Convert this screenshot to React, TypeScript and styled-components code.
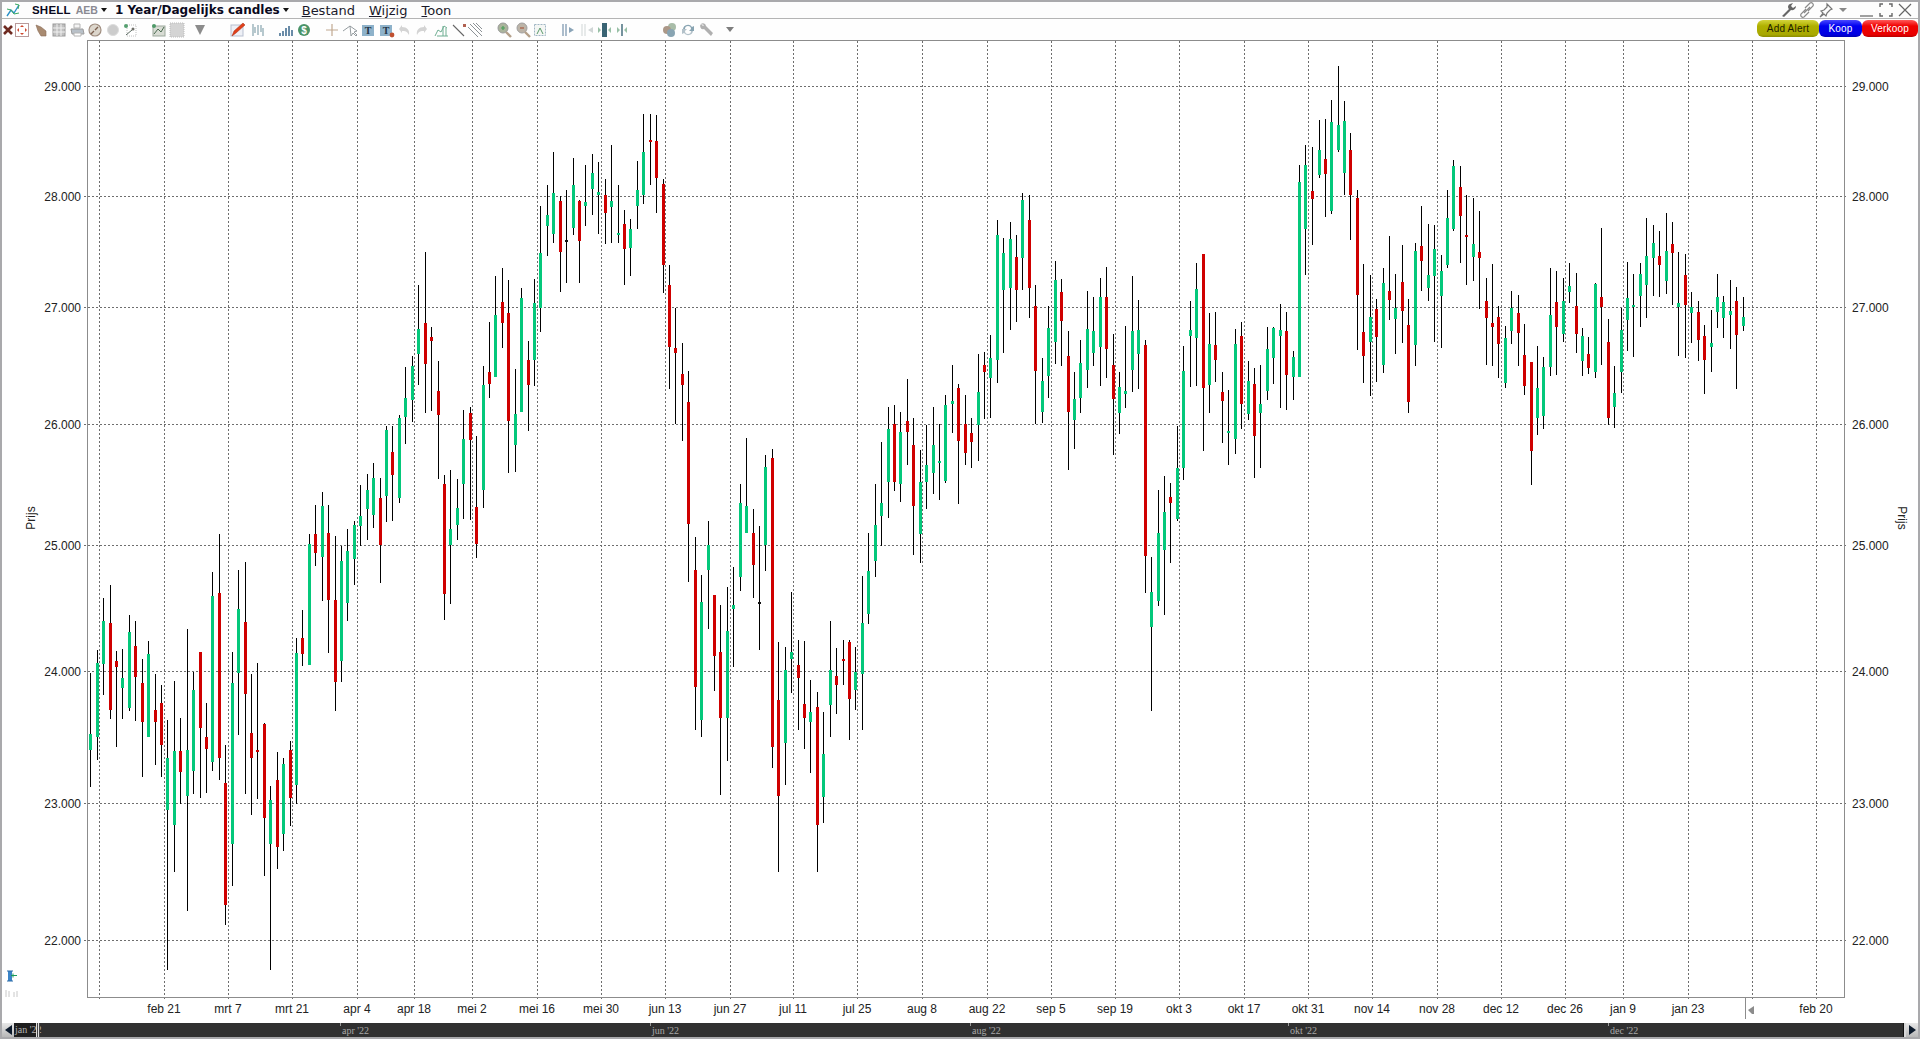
import React from 'react';
import styled, { createGlobalStyle } from 'styled-components';

type Row = [number, number, number, number, number, string];
type Candle = { x: number; hi: number; top: number; bot: number; lo: number; c: string };

const seg = (ox: number, oy: number, kx: number, ky: number, rows: Row[]): Candle[] =>
  rows.map(([x, h, t, b, l, c]) => ({
    x: Math.floor(ox + x * kx),
    hi: Math.round(oy + h * ky),
    top: Math.round(oy + t * ky),
    bot: Math.round(oy + b * ky),
    lo: Math.round(oy + l * ky),
    c,
  }));

const third = 1 / 3;

const candles: Candle[] = [
  ...seg(80, 500, third, third, [
    [31, 518, 702, 750, 860, 'g'], [52, 450, 489, 711, 780, 'g'], [70, 294, 363, 492, 585, 'g'],
    [91, 255, 369, 630, 657, 'r'], [109, 453, 483, 501, 741, 'r'], [127, 447, 534, 564, 657, 'g'],
    [148, 345, 396, 624, 633, 'g'], [166, 363, 438, 531, 663, 'r'], [187, 477, 549, 666, 831, 'r'],
    [205, 423, 462, 711, 711, 'g'], [226, 522, 630, 666, 795, 'r'], [244, 555, 609, 735, 831, 'r'],
    [262, 660, 774, 930, 1410, 'g'], [283, 543, 753, 975, 1116, 'g'], [301, 654, 753, 816, 912, 'r'],
    [322, 387, 750, 888, 1233, 'g'], [340, 516, 570, 813, 882, 'g'], [361, 456, 456, 684, 894, 'r'],
    [379, 609, 711, 747, 879, 'r'], [397, 216, 288, 786, 813, 'g'], [418, 102, 279, 774, 840, 'r'],
    [436, 735, 849, 1215, 1275, 'r'], [457, 456, 549, 1032, 1158, 'g'], [475, 210, 327, 519, 705, 'g'],
    [496, 186, 366, 582, 882, 'r'], [514, 522, 699, 774, 945, 'r'], [532, 489, 750, 756, 897, 'r'],
    [553, 669, 672, 954, 1128, 'r'], [571, 858, 900, 1032, 1410, 'g'], [592, 756, 840, 1041, 1107, 'r'],
    [610, 774, 792, 1002, 1053, 'g'], [631, 723, 750, 894, 978, 'r'], [649, 414, 459, 855, 912, 'g'],
    [667, 330, 414, 462, 498, 'r'], [688, 102, 132, 495, 495, 'g'], [706, 15, 102, 159, 198, 'r'],
    [727, -24, 18, 171, 303, 'g'], [745, 15, 99, 300, 459, 'r'], [766, 108, 300, 546, 633, 'r'],
    [784, 138, 183, 483, 546, 'g'], [802, 87, 153, 309, 363, 'g'], [823, 63, 75, 177, 255, 'g'],
  ]),
  ...seg(300, 240, third, third, [
    [181, 735, 828, 858, 918, 'g'], [202, 702, 750, 807, 900, 'g'], [220, 669, 714, 825, 864, 'g'],
    [241, 714, 774, 915, 1029, 'r'], [259, 558, 570, 768, 846, 'g'], [277, 558, 636, 705, 843, 'r'],
    [298, 525, 534, 774, 789, 'g'], [316, 381, 474, 531, 612, 'g'], [337, 348, 378, 480, 546, 'g'],
    [355, 135, 267, 342, 435, 'g'], [376, 36, 249, 372, 519, 'r'], [394, 261, 291, 303, 513, 'r'],
    [415, 363, 453, 525, 717, 'r'], [433, 705, 732, 1062, 1140, 'r'], [451, 690, 867, 915, 1092, 'g'],
    [472, 717, 804, 855, 900, 'g'], [490, 510, 597, 732, 837, 'g'], [511, 501, 519, 600, 840, 'r'],
    [529, 588, 801, 912, 954, 'r'], [550, 378, 435, 750, 804, 'g'], [568, 246, 396, 432, 474, 'r'],
    [586, 108, 225, 411, 411, 'g'], [607, 84, 186, 249, 324, 'r'], [625, 120, 219, 543, 699, 'r'],
    [646, 387, 522, 615, 696, 'g'], [664, 144, 174, 516, 516, 'g'], [685, 303, 360, 435, 573, 'r'],
    [703, 117, 189, 360, 438, 'g'], [721, -102, 39, 204, 276, 'g'],
  ]),
  ...seg(500, 100, third, third, [
    [142, 255, 345, 378, 468, 'g'], [160, 156, 279, 402, 429, 'g'], [181, 288, 303, 456, 576, 'r'],
    [199, 270, 420, 426, 549, 'k'], [220, 174, 255, 384, 405, 'g'], [238, 300, 303, 423, 549, 'r'],
    [256, 195, 306, 318, 378, 'g'], [277, 162, 219, 267, 345, 'g'], [295, 186, 276, 285, 402, 'g'],
    [316, 237, 285, 339, 432, 'r'], [334, 135, 303, 321, 429, 'g'], [355, 255, 399, 405, 429, 'g'],
    [373, 330, 372, 447, 555, 'r'], [391, 357, 387, 444, 528, 'g'], [412, 183, 270, 318, 387, 'g'],
    [430, 42, 156, 285, 312, 'g'], [451, 42, 120, 126, 255, 'r'], [469, 45, 123, 234, 339, 'r'],
    [490, 237, 252, 495, 579, 'r'], [508, 495, 555, 741, 866, 'r'], [526, 624, 744, 759, 971, 'r'],
  ]),
  ...seg(660, 340, third, 0.3444, [
    [67, 9, 99, 130, 292, 'r'], [85, 90, 180, 534, 702, 'r'], [106, 573, 669, 1009, 1131, 'r'],
    [124, 682, 762, 1102, 1152, 'g'], [145, 526, 595, 667, 838, 'g'], [163, 740, 740, 917, 1018, 'r'],
    [181, 769, 906, 1098, 1320, 'r'], [202, 717, 846, 1098, 1221, 'g'], [220, 660, 769, 781, 949, 'g'],
    [241, 418, 474, 687, 729, 'g'], [259, 285, 483, 559, 559, 'g'], [280, 490, 560, 652, 748, 'r'],
    [298, 540, 761, 766, 900, 'k'], [316, 334, 369, 595, 670, 'g'], [337, 316, 343, 1182, 1242, 'r'],
    [355, 877, 1045, 1323, 1545, 'r'], [376, 891, 958, 1170, 1291, 'g'], [394, 732, 906, 925, 1024, 'g'],
    [415, 870, 944, 980, 1131, 'r'], [433, 873, 1057, 1098, 1188, 'r'], [451, 987, 1080, 1109, 1257, 'g'],
    [472, 1021, 1066, 1407, 1545, 'r'], [490, 1080, 1202, 1326, 1401, 'g'], [511, 816, 958, 1059, 1152, 'g'],
    [529, 894, 976, 1002, 1086, 'r'], [550, 870, 926, 932, 1002, 'r'], [568, 870, 877, 1041, 1161, 'r'],
    [586, 891, 964, 1016, 1074, 'g'], [607, 685, 822, 969, 1131, 'g'], [625, 559, 671, 795, 825, 'g'],
    [646, 418, 537, 642, 687, 'g'], [664, 296, 474, 510, 597, 'g'], [685, 195, 258, 411, 516, 'g'],
    [703, 189, 244, 411, 438, 'r'], [721, 209, 267, 417, 469, 'g'], [742, 113, 235, 267, 363, 'r'],
    [760, 226, 305, 481, 624, 'r'], [781, 319, 412, 562, 648, 'g'], [799, 247, 363, 411, 490, 'g'],
    [820, 195, 305, 385, 447, 'g'], [838, 244, 351, 357, 465, 'g'], [856, 160, 189, 408, 414, 'g'],
    [877, 73, 177, 186, 270, 'g'], [895, 128, 139, 292, 475, 'r'], [916, 160, 244, 328, 363, 'r'],
    [934, 226, 270, 296, 372, 'r'], [955, 41, 151, 246, 351, 'g'], [973, 35, 73, 93, 229, 'r'],
  ]),
  ...seg(0, 0, 1, 1, [
    [990, 335, 358, 378, 418, 'g'], [997, 220, 235, 360, 383, 'g'], [1003, 238, 253, 290, 353, 'g'],
    [1010, 222, 239, 288, 330, 'g'], [1016, 235, 257, 290, 322, 'r'], [1022, 193, 200, 258, 290, 'g'],
    [1029, 195, 220, 288, 318, 'r'], [1035, 285, 306, 371, 424, 'r'],
  ]),
  ...seg(1040, 180, third, 0.3444, [
    [7, 517, 584, 673, 705, 'g'], [25, 366, 430, 569, 633, 'g'], [46, 235, 290, 470, 534, 'g'],
    [64, 287, 325, 409, 540, 'r'], [85, 438, 511, 674, 842, 'r'], [103, 558, 636, 697, 781, 'g'],
    [121, 465, 531, 633, 677, 'g'], [142, 322, 433, 552, 604, 'g'], [160, 340, 438, 502, 540, 'g'],
    [181, 285, 340, 485, 598, 'g'], [199, 253, 340, 491, 575, 'r'], [220, 447, 537, 636, 799, 'r'],
    [238, 558, 601, 677, 738, 'g'], [256, 424, 613, 621, 662, 'g'], [277, 279, 438, 552, 616, 'g'],
    [295, 348, 436, 505, 607, 'g'], [316, 465, 479, 1092, 1199, 'r'], [334, 1095, 1196, 1298, 1542, 'g'],
    [355, 900, 1025, 1222, 1237, 'g'], [373, 859, 964, 1074, 1263, 'g'], [391, 880, 920, 938, 1112, 'r'],
    [412, 714, 836, 984, 990, 'g'], [430, 483, 555, 836, 871, 'g'], [451, 351, 436, 453, 601, 'g'],
    [469, 241, 317, 459, 598, 'g'], [490, 215, 215, 604, 787, 'r'], [508, 386, 476, 595, 677, 'g'],
    [526, 383, 479, 523, 587, 'r'], [547, 558, 616, 642, 764, 'r'], [565, 610, 729, 735, 828, 'g'],
    [586, 433, 476, 752, 796, 'g'], [604, 412, 453, 650, 723, 'r'], [625, 526, 584, 679, 697, 'g'],
    [643, 546, 592, 743, 865, 'r'], [661, 537, 650, 677, 836, 'g'], [682, 427, 491, 613, 639, 'g'],
    [700, 427, 430, 517, 592, 'g'], [721, 360, 436, 453, 662, 'g'], [739, 383, 438, 566, 668, 'r'],
    [760, 497, 514, 572, 639, 'g'],
  ]),
  ...seg(0, 0, 1, 1, [
    [1299, 165, 182, 377, 377, 'g'], [1305, 145, 165, 229, 275, 'g'], [1312, 147, 191, 199, 245, 'r'],
    [1319, 120, 150, 175, 178, 'g'], [1325, 119, 159, 174, 217, 'r'], [1331, 100, 122, 211, 214, 'g'],
    [1338, 66, 125, 150, 152, 'g'],
  ]),
  ...seg(1340, 60, third, third, [
    [13, 123, 183, 339, 406, 'g'], [31, 219, 270, 405, 540, 'r'], [52, 390, 414, 705, 870, 'r'],
    [70, 612, 816, 888, 969, 'r'], [91, 645, 771, 846, 1008, 'g'], [109, 717, 747, 831, 966, 'r'],
    [130, 624, 669, 915, 939, 'g'], [148, 528, 693, 720, 780, 'r'], [166, 642, 744, 777, 882, 'g'],
    [187, 555, 666, 753, 849, 'r'], [205, 717, 795, 1026, 1059, 'r'], [226, 549, 573, 855, 918, 'g'],
    [244, 438, 558, 603, 693, 'r'], [265, 492, 645, 684, 723, 'g'], [283, 495, 567, 648, 846, 'g'],
    [304, 585, 633, 708, 864, 'g'], [322, 390, 474, 615, 624, 'g'], [340, 300, 318, 507, 513, 'g'],
    [361, 318, 381, 468, 609, 'r'], [379, 405, 525, 531, 675, 'r'], [400, 414, 552, 591, 663, 'g'],
    [418, 453, 576, 594, 747, 'r'], [439, 654, 723, 774, 915, 'r'], [457, 612, 789, 801, 918, 'r'],
    [475, 738, 771, 852, 954, 'r'], [496, 798, 834, 969, 984, 'g'], [514, 693, 744, 813, 852, 'g'],
    [535, 705, 759, 819, 918, 'r'], [553, 792, 885, 978, 1005, 'r'], [574, 906, 906, 1173, 1275, 'r'],
    [592, 858, 984, 1074, 1125, 'g'], [610, 891, 921, 1068, 1107, 'g'], [631, 624, 765, 921, 948, 'g'],
    [649, 633, 726, 801, 945, 'r'], [670, 654, 723, 822, 846, 'g'], [688, 609, 678, 696, 729, 'g'],
    [709, 639, 738, 822, 879, 'r'], [727, 804, 828, 903, 948, 'g'], [745, 831, 882, 924, 942, 'r'],
    [766, 669, 672, 936, 954, 'g'], [784, 504, 711, 741, 915, 'r'], [805, 777, 846, 1074, 1095, 'r'],
    [823, 918, 999, 1041, 1104, 'g'], [844, 744, 810, 936, 999, 'g'], [862, 606, 714, 780, 873, 'g'],
    [880, 642, 735, 741, 891, 'g'], [901, 609, 642, 708, 801, 'g'], [919, 474, 588, 675, 774, 'g'],
    [940, 495, 549, 594, 708, 'g'], [958, 513, 588, 615, 711, 'r'], [979, 459, 573, 663, 702, 'g'],
    [997, 486, 552, 579, 735, 'r'], [1015, 576, 729, 741, 888, 'g'], [1036, 582, 645, 735, 894, 'r'],
    [1054, 696, 741, 759, 849, 'g'], [1075, 723, 756, 840, 903, 'r'], [1093, 795, 828, 900, 1002, 'r'],
    [1114, 750, 849, 861, 936, 'g'], [1132, 642, 711, 756, 804, 'g'], [1150, 708, 726, 774, 834, 'g'],
    [1171, 660, 753, 765, 867, 'g'], [1189, 681, 723, 825, 987, 'r'], [1210, 711, 771, 798, 813, 'g'],
  ]),
];

const bodyColor: Record<string, string> = { g: '#04c87b', r: '#cf0000', k: '#111111' };

const priceLines: [number, string][] = [
  [86, '29.000'], [196, '28.000'], [307, '27.000'], [424, '26.000'],
  [545, '25.000'], [671, '24.000'], [803, '23.000'], [940, '22.000'],
];

const timeLines: [number, string][] = [
  [99, ''], [164, 'feb 21'], [228, 'mrt 7'], [292, 'mrt 21'], [357, 'apr 4'], [414, 'apr 18'],
  [472, 'mei 2'], [537, 'mei 16'], [601, 'mei 30'], [665, 'jun 13'], [730, 'jun 27'], [793, 'jul 11'],
  [857, 'jul 25'], [922, 'aug 8'], [987, 'aug 22'], [1051, 'sep 5'], [1115, 'sep 19'], [1179, 'okt 3'],
  [1244, 'okt 17'], [1308, 'okt 31'], [1372, 'nov 14'], [1437, 'nov 28'], [1501, 'dec 12'],
  [1565, 'dec 26'], [1623, 'jan 9'], [1688, 'jan 23'], [1752, ''], [1816, 'feb 20'],
];

const months: [number, string][] = [
  [342, "apr '22"], [652, "jun '22"], [972, "aug '22"], [1290, "okt '22"], [1610, "dec '22"],
];

const tools: { x: number; icon: React.ReactNode }[] = [
  { x: 8, icon: <path d="M4 4l8 8M12 4l-8 8" stroke="#6e2a20" strokeWidth="2.6" /> },
  { x: 22, icon: (<>
    <rect x="1.5" y="1.5" width="13" height="13" fill="#fff" stroke="#b89a9a" />
    <path d="M8 3l2 2H6zM8 13l-2-2h4zM3 8l2-2v4zM13 8l-2 2V6z" fill="#cf4a30" />
  </>) },
  { x: 41, icon: <path d="M3 3l5 2 5 4v5H8L5 9z" fill="#a88a70" stroke="#8a6c58" strokeWidth=".6" /> },
  { x: 59, icon: (<>
    <rect x="2" y="2" width="12" height="12" fill="#c0c0c0" stroke="#9a9a9a" />
    <path d="M6 2v12M10 2v12M2 6h12M2 10h12" stroke="#f0f0f0" />
  </>) },
  { x: 77, icon: (<>
    <path d="M5 2h6v4H5z" fill="#f4f4f4" stroke="#b4b4b4" />
    <path d="M2 7h12l1 5H3z" fill="#b8c0c8" stroke="#9c9c9c" />
    <path d="M5 11h7v3H5z" fill="#fff" stroke="#b4b4b4" />
  </>) },
  { x: 95, icon: (<>
    <circle cx="8" cy="8" r="6" fill="#dcd6cc" stroke="#a08e80" strokeWidth="1.2" />
    <path d="M8 8l3-3M4 12l3-3" stroke="#7c6050" strokeWidth="1.4" />
  </>) },
  { x: 113, icon: <circle cx="8" cy="8" r="5.5" fill="#cccccc" stroke="#dcdcdc" /> },
  { x: 130, icon: (<>
    <rect x="5" y="3" width="9" height="11" fill="#fff" stroke="#c0c0c0" strokeDasharray="1 1" />
    <circle cx="4" cy="4" r="2" fill="#55a070" /><circle cx="11" cy="7" r="1.5" fill="#70706a" />
    <path d="M4 13l6-5" stroke="#5a6a60" />
  </>) },
  { x: 158, icon: (<>
    <rect x="3" y="4" width="12" height="10" fill="#d8dcd4" stroke="#9ca89c" />
    <circle cx="4" cy="4" r="2" fill="#4f9a68" /><path d="M4 12l4-5 3 3 3-5" stroke="#4a6a50" fill="none" />
  </>) },
  { x: 177, icon: <rect x="1" y="1" width="14" height="14" fill="#d4d4d4" stroke="#bcbcbc" strokeDasharray="1 1" /> },
  { x: 200, icon: <path d="M3 3h10l-5 10z" fill="#8c8c8c" /> },
  { x: 238, icon: (<>
    <rect x="1" y="3" width="12" height="11" fill="#eef0f6" stroke="#b8c0d0" />
    <path d="M2 14l2-5L13 1l2 2-9 8z" fill="#e0401a" stroke="#a82a10" strokeWidth=".5" />
  </>) },
  { x: 258, icon: <path d="M3 2v12M8 3v10M13 6v8M5 5v6M11 3v7" stroke="#7c9ca6" strokeWidth="1.1" fill="none" /> },
  { x: 286, icon: <path d="M2 14v-3M5 14V9M8 14V6M11 14V4M14 14V8" stroke="#6a8ca8" strokeWidth="2" /> },
  { x: 304, icon: (<>
    <circle cx="8" cy="8" r="6" fill="#4b9468" />
    <text x="8" y="11.5" fontSize="10" fontWeight="700" fontFamily="Liberation Sans" fill="#fff" textAnchor="middle">$</text>
  </>) },
  { x: 332, icon: <path d="M8 2v12M2 8h12" stroke="#c0a890" strokeWidth="1.2" /> },
  { x: 350, icon: <path d="M1 9l7-5M8 4l1 10 2-3 3 3 1-1-3-3 3-1z" fill="#fff" stroke="#8a9296" strokeWidth=".9" /> },
  { x: 368, icon: (<>
    <rect x="2" y="3" width="12" height="11" fill="#8eb2ca" />
    <text x="8" y="12" fontSize="10" fontWeight="700" fontFamily="Liberation Serif" fill="#234" textAnchor="middle">T</text>
  </>) },
  { x: 387, icon: (<>
    <rect x="1" y="3" width="12" height="11" fill="#8eb2ca" />
    <text x="7" y="12" fontSize="10" fontWeight="700" fontFamily="Liberation Serif" fill="#234" textAnchor="middle">T</text>
    <circle cx="13" cy="13" r="2.4" fill="#c05030" />
  </>) },
  { x: 404, icon: <path d="M3 7l3-4v2c5 0 8 3 7 8-2-4-4-4-7-4v2z" fill="#d4d4d4" /> },
  { x: 422, icon: <path d="M13 7l-3-4v2C5 5 2 8 3 13c2-4 4-4 7-4v2z" fill="#d4d4d4" /> },
  { x: 441, icon: <path d="M2 14l3-6 3 2 3-6 3 2M4 14h11M10 4v10M13 6v8" stroke="#6fae92" fill="none" /> },
  { x: 459, icon: (<>
    <path d="M2 3l11 11" stroke="#666" strokeWidth="1.1" />
    <rect x="12" y="2" width="3" height="3" fill="#b06050" />
  </>) },
  { x: 475, icon: <path d="M1 5l10 10M3 2l12 12M6 1l9 9M9 1l6 6" stroke="#8c9296" /> },
  { x: 504, icon: (<>
    <circle cx="7" cy="6" r="5" fill="#aab49c" stroke="#9a9a9a" />
    <path d="M5 6h4M7 4v4" stroke="#4aa05a" strokeWidth="1.2" />
    <path d="M10 10l5 5" stroke="#b4a08a" strokeWidth="2.4" />
  </>) },
  { x: 523, icon: (<>
    <circle cx="7" cy="6" r="5" fill="#bcb4a8" stroke="#a0a0a0" />
    <path d="M5 6h4" stroke="#a85a40" strokeWidth="1.2" />
    <path d="M10 10l5 5" stroke="#b4a08a" strokeWidth="2.4" />
  </>) },
  { x: 540, icon: (<>
    <rect x="2.5" y="2.5" width="11" height="11" fill="#f4f6f4" stroke="#a0b6c4" strokeDasharray="2 1" />
    <path d="M5 12l3-6 3 6" stroke="#5a9a6a" fill="none" />
  </>) },
  { x: 568, icon: (<>
    <path d="M3 2v12M6 2v12" stroke="#5a7c9a" />
    <path d="M9 5v6l5-3z" fill="#8aa4b8" />
  </>) },
  { x: 587, icon: (<>
    <path d="M3 2v12M6 2v12" stroke="#d0d6d6" />
    <path d="M14 5v6L9 8z" fill="#d0d6d6" />
  </>) },
  { x: 605, icon: (<>
    <rect x="5" y="1" width="5" height="14" fill="#3a6474" />
    <path d="M4 8l-3-3v6zM11 8l3-3v6z" fill="#98c0a6" />
  </>) },
  { x: 623, icon: (<>
    <path d="M7 2v12" stroke="#3a6474" strokeWidth="1.4" />
    <path d="M5 8L2 5v6zM9 8l3-3v6z" fill="#98c0a6" />
  </>) },
  { x: 670, icon: (<>
    <circle cx="10" cy="5" r="4" fill="#a8bca8" /><circle cx="5" cy="8" r="4" fill="#ac9888" /><circle cx="9" cy="11" r="4" fill="#88a4b2" />
  </>) },
  { x: 688, icon: (<>
    <path d="M3 7a5 5 0 0 1 9-2l2-1v5h-5l2-2a3 3 0 0 0-6 0z" fill="#88a4b2" />
    <path d="M13 9a5 5 0 0 1-9 2l-2 1V7h5l-2 2a3 3 0 0 0 6 0z" fill="#b4c2ca" />
  </>) },
  { x: 707, icon: <path d="M2 2a3 3 0 0 1 5 2l7 7-2 3-7-7a3 3 0 0 1-3-5l2 2 1-1z" fill="#b0b0b0" /> },
  { x: 730, icon: <path d="M4 5h8l-4 5z" fill="#7e7e7e" /> },
];

const GlobalStyle = createGlobalStyle`
  html, body { margin: 0; height: 100%; background: #fff; overflow: hidden; }
`;

const Frame = styled.div`
  height: 100vh;
  box-sizing: border-box;
  display: flex;
  flex-direction: column;
  border: 2px solid #a9a9ac;
  font-family: 'Liberation Sans', sans-serif;
`;

const TitleBar = styled.div`
  height: 16px;
  display: flex;
  align-items: center;
  background: #fdfdfd;
  border-bottom: 1px solid #b4b4b4;
  flex: none;
`;

const Logo = styled.svg`
  width: 14px;
  height: 14px;
  margin-left: 4px;
  flex: none;
`;

const Symbol = styled.span`
  margin-left: 12px;
  font: bold 11.5px 'Liberation Sans', sans-serif;
  letter-spacing: 0.2px;
  color: #0a0a1e;
`;

const Exchange = styled.span`
  margin-left: 5px;
  font: bold 10.5px 'Liberation Sans', sans-serif;
  color: #8a8a92;
`;

const Period = styled.span`
  margin-left: 8px;
  font: bold 12px 'DejaVu Sans', sans-serif;
  color: #0a0a1e;
`;

const Caret = styled.i`
  width: 0;
  height: 0;
  margin-left: 3px;
  border: 3.5px solid transparent;
  border-top: 4px solid #111;
  border-bottom: 0;
`;

const Menu = styled.span<{ $gap: number }>`
  margin-left: ${(p) => p.$gap}px;
  font: 13px 'DejaVu Sans', sans-serif;
  color: #1a1a2a;
  u { text-underline-offset: 1px; }
`;

const WindowIcons = styled.div`
  margin-left: auto;
  display: flex;
  align-items: center;
  gap: 3px;
  padding-right: 5px;
`;

const WindowIcon = styled.svg<{ $shift?: number }>`
  width: 16px;
  height: 16px;
  margin-left: ${(p) => p.$shift ?? 0}px;
`;

const ToolRow = styled.div`
  height: 21px;
  flex: none;
  display: flex;
  align-items: center;
  background: #fefefe;
`;

const Tool = styled.svg<{ $gap: number }>`
  width: 16px;
  height: 16px;
  flex: none;
  margin-left: ${(p) => p.$gap}px;
`;

const ActionGroup = styled.div`
  margin-left: auto;
  margin-bottom: 2px;
  display: flex;
  height: 17px;
`;

const tones = {
  alert: 'linear-gradient(#d4d43c, #b0b000 35%, #a8a800 85%, #8c8c00)',
  buy: 'linear-gradient(#4a4aff, #0000f0 35%, #0000e0 85%, #0000b0)',
  sell: 'linear-gradient(#ff5a5a, #f00000 35%, #e80000 85%, #b80000)',
};

const ActionButton = styled.button<{ $tone: keyof typeof tones; $w: number }>`
  width: ${(p) => p.$w}px;
  height: 17px;
  padding: 0;
  border: 0;
  border-radius: 6px;
  background: ${(p) => tones[p.$tone]};
  color: ${(p) => (p.$tone === 'alert' ? '#1e1e00' : '#ffffff')};
  font: 10px 'Liberation Sans', sans-serif;
  letter-spacing: 0.2px;
`;

const ChartPanel = styled.div`
  flex: 1;
  min-height: 0;
  background: #fff;
`;

const ChartSvg = styled.svg`
  display: block;
  width: 100%;
  height: 100%;
`;

const AxisLabel = styled.text`
  font: 12px 'Liberation Sans', sans-serif;
  fill: #222;
`;

const Timeline = styled.div`
  height: 14px;
  flex: none;
  display: flex;
  background: #303030;
`;

const ScrollButton = styled.div`
  width: 12px;
  flex: none;
  display: flex;
  align-items: center;
  justify-content: center;
  background: linear-gradient(#e8e8e8, #b8b8b8);
`;

const ScrollArrow = styled.i<{ $right?: boolean }>`
  width: 0;
  height: 0;
  border: 5px solid transparent;
  ${(p) => (p.$right ? 'border-left: 7px solid #0c1a2c; border-right: 0;' : 'border-right: 7px solid #0c1a2c; border-left: 0;')}
`;

const SelectedRange = styled.div`
  width: 22px;
  flex: none;
  background: #1e1e1e;
  color: #b4b4b4;
  font: 10px 'Liberation Serif', serif;
  line-height: 14px;
  padding-left: 1px;
  box-sizing: border-box;
  white-space: nowrap;
`;

const Grip = styled.div`
  width: 4px;
  flex: none;
  background: repeating-linear-gradient(90deg, #e0e0e0 0 1px, #444 1px 2px);
`;

const Track = styled.div`
  flex: 1;
  position: relative;
`;

const MonthLabel = styled.span<{ $left: number }>`
  position: absolute;
  left: ${(p) => p.$left}px;
  top: 2px;
  font: 10px 'Liberation Serif', serif;
  color: #a8a8a8;
  white-space: nowrap;
  &::before {
    content: '';
    position: absolute;
    left: -2px;
    top: -2px;
    width: 1px;
    height: 3px;
    background: #9a9a9a;
  }
`;

const TrackEnd = styled.div`
  width: 3px;
  flex: none;
  background: linear-gradient(90deg, #111 0 1px, #d8d8d8 1px);
`;

const App = () => {
  let cursor = 2;
  return (
    <Frame>
      <GlobalStyle />
      <TitleBar>
        <Logo viewBox="0 0 14 14">
          <path d="M1 13l4-6 3 3 5-8" stroke="#2a90c8" strokeWidth="1.4" fill="none" />
          <path d="M1 6l4 1 3 4 5-1M9 1l4 1-1 4" stroke="#3aa860" fill="none" />
        </Logo>
        <Symbol>SHELL</Symbol>
        <Exchange>AEB</Exchange>
        <Caret />
        <Period>1 Year/Dagelijks candles</Period>
        <Caret />
        <Menu $gap={13}><u>B</u>estand</Menu>
        <Menu $gap={14}><u>W</u>ijzig</Menu>
        <Menu $gap={14}><u>T</u>oon</Menu>
        <WindowIcons>
          <WindowIcon viewBox="0 0 16 16">
            <path d="M2 14l7-7a3 3 0 0 1 1-5l3-1-2 3 2 2 3-2a4 4 0 0 1-5 4l-7 7z" fill="#666" />
          </WindowIcon>
          <WindowIcon viewBox="0 0 16 16">
            <path d="M6 6l5-5c2-1 4 1 3 3l-5 5M10 10l-5 5c-2 1-4-1-3-3l5-5M5 11l6-6" stroke="#8a8a8a" strokeWidth="1.2" fill="none" />
          </WindowIcon>
          <WindowIcon viewBox="0 0 16 16">
            <path d="M9 2l5 5-2 1-3 3-1 3-2-2-4 3 3-4-2-2 3-1 3-3z" fill="none" stroke="#777" strokeWidth="1.2" />
          </WindowIcon>
          <WindowIcon $shift={-2} viewBox="0 0 16 16">
            <path d="M4 6h8l-4 4z" fill="#888" />
          </WindowIcon>
          <WindowIcon $shift={5} viewBox="0 0 16 16">
            <path d="M1 14h13" stroke="#777" strokeWidth="1.4" />
          </WindowIcon>
          <WindowIcon viewBox="0 0 16 16">
            <path d="M2 5V2h3M11 2h3v3M14 11v3h-3M5 14H2v-3" stroke="#666" strokeWidth="1.4" fill="none" />
          </WindowIcon>
          <WindowIcon viewBox="0 0 16 16">
            <path d="M2 2l12 12M14 2L2 14" stroke="#666" strokeWidth="1.2" />
          </WindowIcon>
        </WindowIcons>
      </TitleBar>
      <ToolRow>
        {tools.map((t) => {
          const gap = t.x - 8 - cursor;
          cursor = t.x + 8;
          return (
            <Tool key={t.x} $gap={gap} viewBox="0 0 16 16">
              {t.icon}
            </Tool>
          );
        })}
        <ActionGroup>
          <ActionButton $tone="alert" $w={62}>Add Alert</ActionButton>
          <ActionButton $tone="buy" $w={43}>Koop</ActionButton>
          <ActionButton $tone="sell" $w={56}>Verkoop</ActionButton>
        </ActionGroup>
      </ToolRow>
      <ChartPanel>
        <ChartSvg viewBox="2 40 1916 983">
          <g shapeRendering="crispEdges">
            {priceLines.map(([y]) => (
              <line key={y} x1={84} x2={1848} y1={y + 0.5} y2={y + 0.5} stroke="#6e6e6e" strokeDasharray="2 2" />
            ))}
            {timeLines.map(([x]) => (
              <line key={x} x1={x + 0.5} x2={x + 0.5} y1={41} y2={1000} stroke="#6e6e6e" strokeDasharray="2 2" />
            ))}
            <rect x={87.5} y={40.5} width={1757} height={957} fill="none" stroke="#8c8c8c" />
            <line x1={1745.5} x2={1745.5} y1={998} y2={1019} stroke="#8c8c8c" />
            {candles.map((k, i) => (
              <g key={i}>
                <rect x={k.x} y={k.hi} width={1} height={k.lo - k.hi} fill="#000" />
                <rect x={k.x - 1} y={k.top} width={3} height={Math.max(k.bot - k.top, 2)} fill={bodyColor[k.c]} />
              </g>
            ))}
          </g>
          {priceLines.map(([y, t]) => (
            <g key={t}>
              <AxisLabel x={81} y={y + 4.5} textAnchor="end">{t}</AxisLabel>
              <AxisLabel x={1852} y={y + 4.5}>{t}</AxisLabel>
            </g>
          ))}
          {timeLines.filter(([, t]) => t).map(([x, t]) => (
            <AxisLabel key={x} x={x} y={1013} textAnchor="middle">{t}</AxisLabel>
          ))}
          <AxisLabel transform="translate(35 518) rotate(-90)" textAnchor="middle">Prijs</AxisLabel>
          <AxisLabel transform="translate(1898 518) rotate(90)" textAnchor="middle">Prijs</AxisLabel>
          <path d="M1754 1006v8h-2l-4-4z" fill="#8c8c8c" />
          <g>
            <rect x={8} y={971} width={4} height={10} fill="#3a84c8" />
            <path d="M7 971h6M7 981h6" stroke="#2a6aa8" />
            <path d="M11 975.5h6M13 973.5v4" stroke="#1a9a5a" />
            <path d="M6 990v7M9 991v6M14 992v5M17 991v6" stroke="#c8c8c8" />
          </g>
        </ChartSvg>
      </ChartPanel>
      <Timeline>
        <ScrollButton><ScrollArrow /></ScrollButton>
        <SelectedRange>jan '22</SelectedRange>
        <Grip />
        <Track>
          {months.map(([x, t]) => (
            <MonthLabel key={t} $left={x - 40}>{t}</MonthLabel>
          ))}
        </Track>
        <TrackEnd />
        <ScrollButton><ScrollArrow $right /></ScrollButton>
      </Timeline>
    </Frame>
  );
};

export default App;
